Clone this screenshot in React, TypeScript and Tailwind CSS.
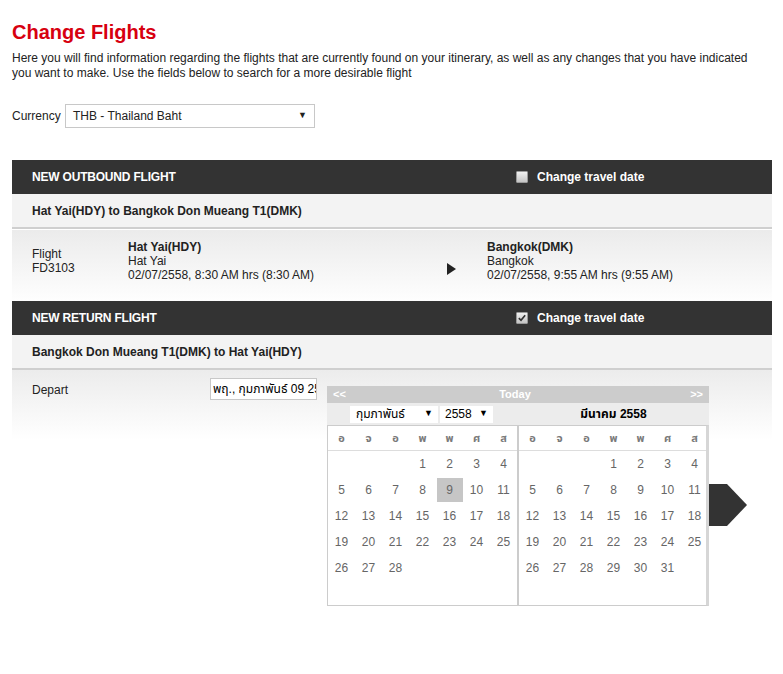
import React from "react";

const FONT = "font-['Liberation_Sans','Noto_Sans_Thai','Loma','Tahoma','DejaVu_Sans',sans-serif]";

function CheckBox({ checked }: { checked?: boolean }) {
  return (
    <span className="relative inline-flex h-[12px] w-[12px] items-center justify-center rounded-[1px] border border-[#9a9a9a] bg-gradient-to-b from-[#f0f0f0] to-[#c4c4c4]">
      {checked && (
        <svg viewBox="0 0 12 12" className="h-[10px] w-[10px]">
          <path d="M2.2 6.2 L4.8 8.8 L9.8 2.8" fill="none" stroke="#333" strokeWidth="2" />
        </svg>
      )}
    </span>
  );
}

function SectionBar({ title, checked }: { title: string; checked?: boolean }) {
  return (
    <div className="flex h-[34px] items-center bg-[#333333] text-[12px] font-bold text-white">
      <div className="w-[504px] pl-5 tracking-[-0.2px]">{title}</div>
      <CheckBox checked={checked} />
      <span className="ml-[9px]">Change travel date</span>
    </div>
  );
}

function RouteRow({ text }: { text: string }) {
  return (
    <div className="flex h-[35px] items-center border-b-2 border-[#cfcfcf] bg-[#f3f3f3] pl-5 text-[12px] font-bold text-[#222]">
      {text}
    </div>
  );
}

type MonthProps = { offset: number; days: number; highlight?: number };

function MonthGrid({ offset, days, highlight, last }: MonthProps & { last?: boolean }) {
  const names = ["อ", "จ", "อ", "พ", "พ", "ศ", "ส"];
  const cells: (number | null)[] = [];
  for (let i = 0; i < offset; i++) cells.push(null);
  for (let d = 1; d <= days; d++) cells.push(d);
  return (
    <div
      className={
        "h-[181px] w-[191px] border border-[#cccccc] bg-white " +
        (last ? "border-r-[3px] border-r-[#d6d6d6]" : "")
      }
    >
      <div className="grid h-[25px] grid-cols-[repeat(7,27px)] items-center border-b border-[#dddddd] text-center text-[11px] font-bold text-[#7a7a7a]">
        {names.map((n, i) => (
          <span key={i}>{n}</span>
        ))}
      </div>
      <div className="grid grid-cols-[repeat(7,27px)] auto-rows-[26px] text-[12px] text-[#666]">
        {cells.map((d, i) => (
          <div key={i} className="flex items-center justify-center">
            {d !== null &&
              (d === highlight ? (
                <span className="flex h-[24px] w-[26px] items-center justify-center bg-[#c6c6c6]">{d}</span>
              ) : (
                <span>{d}</span>
              ))}
          </div>
        ))}
      </div>
    </div>
  );
}

function Calendar() {
  return (
    <div className="absolute left-[315px] top-[16px] z-10 w-[382px] bg-white">
      <div className="flex h-[17px] items-center justify-between bg-[#cccccc] px-[6px] text-[11px] font-bold text-white">
        <span>&lt;&lt;</span>
        <span className="pr-[6px]">Today</span>
        <span>&gt;&gt;</span>
      </div>
      <div className="flex h-[22px] items-center bg-[#ececec] text-[12px] text-black">
        <div className="flex w-[191px] items-center gap-[2px] pl-[23px]">
          <div className="flex h-[17px] w-[88px] items-center justify-between bg-white pl-[6px] pr-[5px]">
            <span>กุมภาพันธ์</span>
            <span className="text-[9px]">▼</span>
          </div>
          <div className="flex h-[17px] w-[53px] items-center justify-between bg-white pl-[5px] pr-[5px]">
            <span>2558</span>
            <span className="text-[9px]">▼</span>
          </div>
        </div>
        <div className="w-[191px] text-center font-bold">มีนาคม 2558</div>
      </div>
      <div className="flex">
        <MonthGrid offset={3} days={28} highlight={9} />
        <MonthGrid offset={3} days={31} last />
      </div>
    </div>
  );
}

export default function App() {
  return (
    <div className={`${FONT} min-h-[674px] bg-white text-[#222]`}>
      <div className="ml-[12px] w-[760px] pt-5">
        <h1 className="text-[20px] font-bold leading-[24px] text-[#d7000f]">Change Flights</h1>
        <p className="mt-[7px] w-[752px] text-[12px] leading-[15px] text-[#222]">
          Here you will find information regarding the flights that are currently found on your itinerary, as well
          as any changes that you have indicated you want to make. Use the fields below to search for a more
          desirable flight
        </p>

        <div className="mt-[23px] flex items-center text-[12px]">
          <span className="w-[53px]">Currency</span>
          <div className="flex h-[24px] w-[250px] items-center justify-between border border-[#c8c8c8] bg-white pl-[7px] pr-[7px]">
            <span>THB - Thailand Baht</span>
            <span className="text-[9px]">▼</span>
          </div>
        </div>

        <div className="mt-[32px]">
          <SectionBar title="NEW OUTBOUND FLIGHT" />
          <RouteRow text="Hat Yai(HDY) to Bangkok Don Mueang T1(DMK)" />
          <div className="mt-px flex h-[71px] bg-gradient-to-b from-[#ebebeb] to-[#fefefe] pl-5 pt-[10px] text-[12px] leading-[14px] text-[#222]">
            <div className="flex w-[96px] flex-col justify-center self-start pt-[7px]">
              <span>Flight</span>
              <span>FD3103</span>
            </div>
            <div className="flex w-[319px] flex-col">
              <span className="font-bold">Hat Yai(HDY)</span>
              <span>Hat Yai</span>
              <span>02/07/2558, 8:30 AM hrs (8:30 AM)</span>
            </div>
            <div className="w-[40px] pt-[23px] text-[12px]">
              <svg width="9" height="12" viewBox="0 0 9 12">
                <path d="M0 0 L9 6 L0 12 Z" fill="#222" />
              </svg>
            </div>
            <div className="flex flex-col">
              <span className="font-bold">Bangkok(DMK)</span>
              <span>Bangkok</span>
              <span>02/07/2558, 9:55 AM hrs (9:55 AM)</span>
            </div>
          </div>

          <SectionBar title="NEW RETURN FLIGHT" checked />
          <RouteRow text="Bangkok Don Mueang T1(DMK) to Hat Yai(HDY)" />
          <div className="relative">
            <div className="flex h-[70px] bg-gradient-to-b from-[#ececec] to-white pl-5 pt-[8px] text-[12px]">
              <span className="w-[178px] pt-[3px]">Depart</span>
              <input
                readOnly
                value="พฤ., กุมภาพันธ์ 09 2558"
                className="h-[22px] w-[107px] border border-[#c8c8c8] bg-white pl-[2px] text-[12px] text-black outline-none"
              />
            </div>
            <Calendar />
            <div className="mt-[44px] flex justify-end pr-[25px]">
              <svg width="50" height="42" viewBox="0 0 50 42">
                <polygon points="0,0 30,0 50,21 30,42 0,42" fill="#333333" />
              </svg>
            </div>
          </div>
        </div>
      </div>
    </div>
  );
}
